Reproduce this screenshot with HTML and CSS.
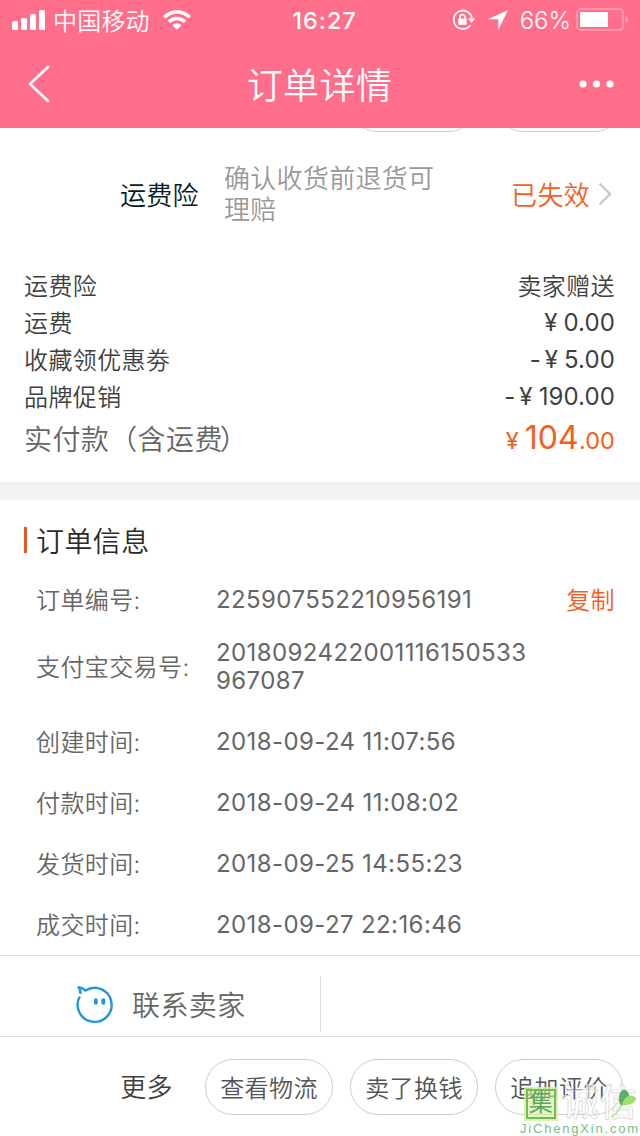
FILE: index.html
```
<!DOCTYPE html>
<html lang="zh-CN">
<head>
    <meta charset="UTF-8">
    <meta name="viewport" content="width=device-width, initial-scale=1.0">
    <title>订单详情</title>
    <link rel="stylesheet" href="styles.css">
</head>
<body>
    <div class="header">
        <div class="status-bar">
            <div class="status-left">
                <svg class="signal" width="34" height="20" viewBox="0 0 34 20" fill="#fff">
                    <rect x="0" y="11" width="6" height="9" rx="1.5"/>
                    <rect x="9" y="8" width="6" height="12" rx="1.5"/>
                    <rect x="18" y="4" width="6" height="16" rx="1.5"/>
                    <rect x="27" y="0" width="6" height="20" rx="1.5"/>
                </svg>
                <span class="carrier">中国移动</span>
                <svg class="wifi" width="28" height="20" viewBox="0 0 28 20" fill="none" stroke="#fff" stroke-width="3.6">
                    <path d="M1.3 7.2a18 18 0 0 1 25.4 0"/>
                    <path d="M5.9 11.8a11.5 11.5 0 0 1 16.2 0"/>
                    <path d="M14 19.8L9.4 15.2a6.5 6.5 0 0 1 9.2 0z" fill="#fff" stroke="none"/>
                </svg>
            </div>
            <div class="time">16:27</div>
            <div class="status-right">
                <svg class="lock" width="24" height="22" viewBox="0 0 24 22" fill="none" stroke="#fff">
                    <path d="M18.3 16.2A9.2 9.2 0 1 1 20 9.5" stroke-width="1.8"/>
                    <path d="M16 9.5h7.2l-3.6 4.5z" fill="#fff" stroke="none"/>
                    <rect x="6.3" y="9.5" width="8.4" height="6.3" rx="0.8" fill="#fff" stroke="none"/>
                    <path d="M8 10V8a2.5 2.5 0 0 1 5 0v2" stroke-width="1.5"/>
                </svg>
                <svg class="arrow" width="20" height="20" viewBox="0 0 20 20" fill="#fff">
                    <path d="M20 0L0 9.2h10.3V20z"/>
                </svg>
                <span class="percent">66%</span>
                <svg class="battery" width="54" height="24" viewBox="0 0 54 24">
                    <rect x="1" y="1" width="46" height="21" rx="3.5" fill="none" stroke="#ffa3b5" stroke-width="1.6"/>
                    <rect x="4" y="4" width="28" height="15" fill="#fff"/>
                    <path d="M49.5 8c3.5 1 3.5 6 0 7z" fill="#ffa3b5"/>
                </svg>
            </div>
        </div>
        <div class="nav">
            <svg class="back" width="22" height="38" viewBox="0 0 22 38" fill="none" stroke="#fff" stroke-width="2.6" stroke-linecap="round" stroke-linejoin="round">
                <path d="M20 2L2 19l18 17"/>
            </svg>
            <h1 class="title">订单详情</h1>
            <svg class="dots" width="36" height="8" viewBox="0 0 36 8" fill="#fff">
                <circle cx="4" cy="4" r="3.6"/>
                <circle cx="17.5" cy="4" r="3.6"/>
                <circle cx="31" cy="4" r="3.6"/>
            </svg>
        </div>
    </div>

    <div class="clipped">
        <div class="clipped-button"></div>
        <div class="clipped-button"></div>
    </div>

    <div class="insurance">
        <div class="insurance-name">运费险</div>
        <div class="insurance-desc">确认收货前退货可理赔</div>
        <div class="insurance-state">已失效</div>
        <svg class="chevron" width="14" height="24" viewBox="0 0 14 24" fill="none" stroke="#c8c8c8" stroke-width="2.4">
            <path d="M1.5 1.5L12 12 1.5 22.5"/>
        </svg>
    </div>

    <div class="prices">
        <div class="price-row"><span>运费险</span><span>卖家赠送</span></div>
        <div class="price-row"><span>运费</span><span class="num"><i class="yen">¥</i>0.00</span></div>
        <div class="price-row"><span>收藏领优惠劵</span><span class="num">-<i class="yen">¥</i>5.00</span></div>
        <div class="price-row"><span>品牌促销</span><span class="num">-<i class="yen">¥</i>190.00</span></div>
        <div class="price-row total"><span>实付款（含运费<span class="paren">）</span></span><span class="num pay"><i class="yen">¥</i><b>104</b>.00</span></div>
    </div>

    <div class="order">
        <h2 class="order-title">订单信息</h2>
        <div class="row"><span class="label">订单编号:</span><span class="value">225907552210956191</span><a class="copy">复制</a></div>
        <div class="row row-long"><span class="label">支付宝交易号:</span><span class="value">2018092422001116150533<br>967087</span></div>
        <div class="row"><span class="label">创建时间:</span><span class="value">2018-09-24 11:07:56</span></div>
        <div class="row"><span class="label">付款时间:</span><span class="value">2018-09-24 11:08:02</span></div>
        <div class="row"><span class="label">发货时间:</span><span class="value">2018-09-25 14:55:23</span></div>
        <div class="row"><span class="label">成交时间:</span><span class="value">2018-09-27 22:16:46</span></div>
    </div>

    <div class="contact">
        <div class="contact-seller">
            <svg class="wangwang" width="40" height="40" viewBox="0 0 40 40" fill="none" stroke="#2196dc" stroke-width="2.4" stroke-linejoin="round">
                <path d="M4.800 12.500A17 17 0 1 0 10.500 6.500Q7 3.300 3.500 3.300Q5.500 5.500 5.500 10"/>
                <ellipse cx="20.800" cy="17.500" rx="2" ry="3.200" fill="#2196dc" stroke="none"/>
                <ellipse cx="28.300" cy="17.500" rx="2" ry="3.200" fill="#2196dc" stroke="none"/>
            </svg>
            <span>联系卖家</span>
        </div>
    </div>

    <div class="actions">
        <span class="more">更多</span>
        <button class="button">查看物流</button>
        <button class="button">卖了换钱</button>
        <button class="button">追加评价</button>
    </div>

    <div class="watermark">
        <div class="wm-top">
            <span class="wm-seal">集</span>
            <span class="wm-name">诚信</span>
        </div>
        <div class="wm-url">JiChengXin.com</div>
        <svg class="wm-leaf" width="28" height="32" viewBox="0 0 28 32">
            <path d="M11 18C8 13 8 4 13 2c4-1 7 4 6 8-1 3-5 4-8 8z" fill="#5fae6c"/>
            <path d="M11 18c2-5 4-9 8-10 4-1 7 1 7 3-1 5-9 6-15 7z" fill="#9be070"/>
            <path d="M11 18Q8 25 1 29" fill="none" stroke="#b5e29c" stroke-width="1.5"/>
        </svg>
    </div>
</body>
</html>
```
FILE: styles.css
```
* {
    box-sizing: border-box;
}
body {
    margin: 0;
    width: 640px;
    height: 1136px;
    overflow: hidden;
    position: relative;
    background-color: #fff;
    font-family: Inter, "Noto Sans CJK SC", sans-serif;
    font-size: 24px;
    font-weight: 350;
    letter-spacing: 0.4px;
    color: #3f3f3f;
}
.header {
    height: 128px;
    background-color: #ff6e8a;
    color: #fff;
}
.status-bar {
    display: grid;
    grid-template-columns: 1fr auto 1fr;
    align-items: center;
    height: 40px;
    padding: 0 10px 0 12px;
}
.status-left,
.status-right {
    display: flex;
    align-items: center;
}
.status-right {
    justify-content: flex-end;
}
.carrier {
    margin-left: 7px;
    padding-bottom: 1px;
    letter-spacing: 0.2px;
}
.wifi {
    margin-left: 13px;
}
.time {
    padding-left: 7px;
    font-size: 23.5px;
    font-weight: 500;
    letter-spacing: 1px;
}
.arrow {
    margin: 0 12px;
}
.percent {
    font-size: 24px;
    letter-spacing: 0;
}
.battery {
    margin-left: 5px;
}
.nav {
    display: flex;
    align-items: center;
    justify-content: space-between;
    height: 88px;
    padding: 0 25px 0 28px;
}
.title {
    margin: 0;
    padding: 0 0 2px 10px;
    font-size: 36px;
    font-weight: 350;
}
.clipped {
    display: flex;
    justify-content: flex-end;
    gap: 18px;
    height: 4px;
    padding-right: 17px;
    align-items: flex-end;
    overflow: hidden;
}
.clipped-button {
    flex: none;
    width: 128px;
    height: 56px;
    border: 1px solid #ccc;
    border-radius: 28px;
}
.insurance {
    display: flex;
    align-items: center;
    height: 124px;
    padding: 0 28px 0 120px;
    font-size: 26px;
    letter-spacing: 0.3px;
}
.insurance-name,
.insurance-state {
    padding-bottom: 2px;
}
.insurance-name {
    width: 104px;
    color: #051b28;
}
.insurance-desc {
    width: 218px;
    line-height: 31px;
    color: #999;
}
.insurance-state {
    margin-left: auto;
    color: #f2601b;
}
.chevron {
    margin-left: 8px;
}
.prices {
    height: 226px;
    padding: 10px 25px 0 24px;
}
.price-row {
    display: flex;
    justify-content: space-between;
    align-items: center;
    height: 37px;
}
.num {
    padding-top: 2px;
    font-weight: 400;
    letter-spacing: 0.1px;
}
.yen {
    font-style: normal;
    margin: 0 6px 0 4px;
}
.total {
    height: 47px;
    font-size: 28px;
    color: #666;
}
.paren {
    margin-left: -3px;
}
.pay {
    padding: 0;
    font-size: 23.5px;
    color: #f2601b;
}
.pay b {
    font-size: 32px;
    font-weight: 400;
}
.order {
    height: 473px;
    padding: 10px 25px 0 24px;
    border-top: 18px solid #f2f2f2;
    color: #666;
}
.order-title {
    display: flex;
    align-items: center;
    height: 59px;
    margin: 0;
    font-size: 28px;
    font-weight: 350;
    color: #2a2a2a;
}
.order-title::before {
    content: "";
    width: 3px;
    height: 26px;
    margin-right: 9px;
    background-color: #dd5b22;
}
.row {
    display: flex;
    align-items: center;
    height: 61px;
    padding-left: 12px;
}
.row-long {
    height: 81px;
    padding-bottom: 8px;
}
.label {
    width: 180px;
    padding-bottom: 3px;
}
.value {
    width: 320px;
    padding-top: 1px;
    font-weight: 400;
    line-height: 28px;
    letter-spacing: 0.4px;
}
.copy {
    margin-left: auto;
    padding-bottom: 3px;
    color: #f2601b;
}
.contact {
    height: 82px;
    padding: 20px 0 4px;
    border-top: 1px solid #ddd;
    border-bottom: 1px solid #ddd;
}
.contact-seller {
    display: flex;
    align-items: center;
    width: 321px;
    height: 56px;
    padding-left: 75px;
    border-right: 1px solid #ddd;
    font-size: 28px;
    color: #666;
}
.wangwang {
    margin-right: 17px;
}
.actions {
    display: flex;
    align-items: center;
    justify-content: flex-end;
    gap: 17px;
    height: 99px;
    padding-right: 17px;
}
.more {
    margin-right: 15px;
    padding-bottom: 2px;
    font-size: 26px;
}
.button {
    width: 128px;
    height: 56px;
    padding: 0 0 1px;
    background-color: #fff;
    border: 1px solid #ccc;
    border-radius: 28px;
    color: #555;
    font: inherit;
    letter-spacing: 0.4px;
}
/* site mark over the bottom right corner */
.watermark {
    position: absolute;
    left: 520px;
    top: 1088px;
    width: 120px;
    height: 48px;
}
.wm-top {
    display: flex;
    gap: 6px;
    height: 32px;
}
.wm-seal {
    width: 30px;
    height: 30px;
    margin: 1px 0 0 6px;
    border: 2px solid #76b95c;
    outline: 2px solid rgba(206, 244, 150, 0.8);
    background-color: rgba(206, 244, 150, 0.6);
    color: #5ba564;
    font-size: 24px;
    font-weight: 400;
    line-height: 24px;
    text-align: center;
}
.wm-name {
    color: rgba(255, 255, 255, 0.6);
    -webkit-text-stroke: 0.7px #d4d4d4;
    font-size: 37px;
    font-weight: 500;
    line-height: 30px;
}
.wm-url {
    margin-top: 2px;
    color: #76bd87;
    font-family: "Liberation Sans", sans-serif;
    font-size: 13px;
    font-weight: 400;
    line-height: 14px;
    letter-spacing: 1.8px;
    white-space: nowrap;
}
.wm-leaf {
    position: absolute;
    left: 90px;
    top: 0;
}
```
